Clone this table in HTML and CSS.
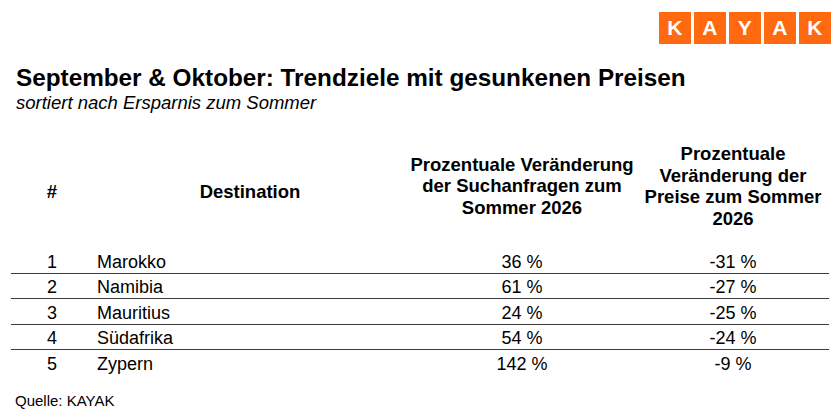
FILE: index.html
```html
<!DOCTYPE html>
<html lang="de">
<head>
<meta charset="utf-8">
<title>Trendziele</title>
<link rel="stylesheet" href="styles.css">
</head>
<body>
<div class="page">
  <div class="logo-row">
    <div class="logo">
      <span class="tile">K</span><span class="tile">A</span><span class="tile">Y</span><span class="tile">A</span><span class="tile">K</span>
    </div>
  </div>
  <h1 class="title">September &amp; Oktober: Trendziele mit gesunkenen Preisen</h1>
  <p class="subtitle">sortiert nach Ersparnis zum Sommer</p>

  <div class="table">
    <div class="row head">
      <div class="cell c-num lowered">#</div>
      <div class="cell c-dest lowered">Destination</div>
      <div class="cell c-val">Prozentuale Veränderung der Suchanfragen zum Sommer 2026</div>
      <div class="cell c-val2">Prozentuale Veränderung der Preise zum Sommer 2026</div>
    </div>
    <div class="row data">
      <div class="cell c-num">1</div><div class="cell c-name">Marokko</div><div class="cell c-val">36 %</div><div class="cell c-val2">-31 %</div>
    </div>
    <div class="row data">
      <div class="cell c-num">2</div><div class="cell c-name">Namibia</div><div class="cell c-val">61 %</div><div class="cell c-val2">-27 %</div>
    </div>
    <div class="row data">
      <div class="cell c-num">3</div><div class="cell c-name">Mauritius</div><div class="cell c-val">24 %</div><div class="cell c-val2">-25 %</div>
    </div>
    <div class="row data">
      <div class="cell c-num">4</div><div class="cell c-name">Südafrika</div><div class="cell c-val">54 %</div><div class="cell c-val2">-24 %</div>
    </div>
    <div class="row data last">
      <div class="cell c-num">5</div><div class="cell c-name">Zypern</div><div class="cell c-val">142 %</div><div class="cell c-val2">-9 %</div>
    </div>
  </div>

  <p class="source">Quelle: KAYAK</p>
</div>
</body>
</html>
```

FILE: styles.css
```css
html, body {
  margin: 0;
  padding: 0;
  background: #ffffff;
}

body {
  font-family: "Liberation Sans", Arial, sans-serif;
  color: #000000;
  width: 840px;
  height: 412px;
  overflow: hidden;
}

.page {
  display: flex;
  flex-direction: column;
}

.logo-row {
  display: flex;
  justify-content: flex-end;
  padding: 12px 9px 0 0;
}

.logo {
  display: flex;
  gap: 2.5px;
}

.tile {
  width: 32.5px;
  height: 32px;
  background: #ff690f;
  color: #ffffff;
  font-weight: 700;
  font-size: 21px;
  display: flex;
  align-items: center;
  justify-content: center;
}

.title {
  margin: 20px 0 0 16px;
  font-size: 24.3px;
  line-height: 28px;
  font-weight: 700;
}

.subtitle {
  margin: 0 0 0 16px;
  font-size: 18.5px;
  line-height: 22px;
  font-style: italic;
}

.table {
  margin: 29px 0 0 11px;
  width: 818px;
  display: flex;
  flex-direction: column;
}

.row {
  display: grid;
  grid-template-columns: 82px 314px 230px 192px;
}

.row.head {
  padding-bottom: 19px;
  font-size: 18.5px;
  line-height: 21.5px;
  font-weight: 700;
  align-items: center;
}

.row.head .cell {
  text-align: center;
  padding: 0 3px;
}

.row.head .lowered {
  padding-top: 12px;
}

.row.data {
  height: 25.6px;
  box-sizing: border-box;
  border-bottom: 1px solid #3c3c3c;
  font-size: 18px;
  line-height: 24.6px;
}

.row.data.last {
  border-bottom: none;
}

.row.data .cell {
  text-align: center;
  padding-top: 1.5px;
}

.row.data .c-name {
  text-align: left;
  padding-left: 4px;
}

.source {
  margin: 16px 0 0 15px;
  font-size: 15px;
  line-height: 17px;
}
```
